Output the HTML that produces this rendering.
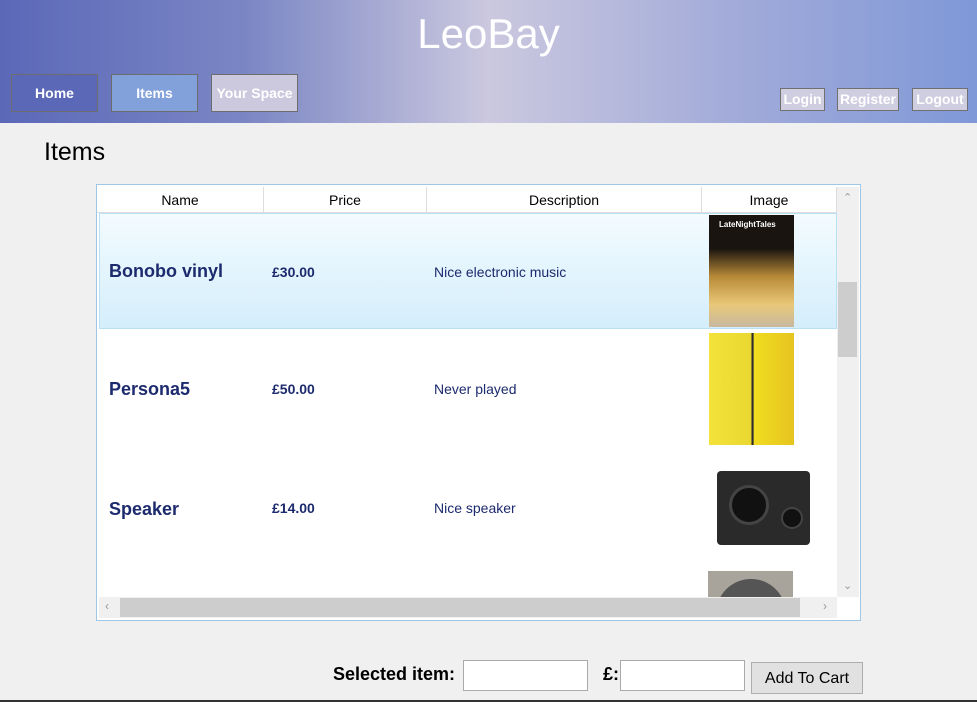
<!DOCTYPE html>
<html><head><meta charset="utf-8"><style>
*{box-sizing:border-box}
body{margin:0;width:977px;height:702px;overflow:hidden;background:#f0f0f0;font-family:"Liberation Sans",sans-serif;position:relative}
.hdr{position:absolute;left:0;top:0;width:977px;height:123px;background:linear-gradient(90deg,#5b68b8 0%,#7a86c4 25%,#cbc8df 50%,#a2abd9 75%,#7f98d8 100%)}
.title{position:absolute;left:0;width:977px;top:10px;text-align:center;color:#fff;font-size:42px;font-family:"Liberation Sans",sans-serif}
.nb{position:absolute;border:1px solid #6d6d6d;color:#fff;font-weight:bold;font-size:14px;text-align:center;line-height:36px;height:38px}
.sb{position:absolute;top:88px;height:23px;border:1px solid #707070;background:#cfcde0;color:#fff;font-weight:bold;font-size:14px;text-align:center;line-height:21px}
h1{position:absolute;left:44px;top:138px;margin:0;font-size:25px;font-weight:normal}
.grid{position:absolute;left:96px;top:184px;width:765px;height:437px;border:1px solid #9ec6e6;background:#fff}
.th{position:absolute;top:2px;height:26px;border-right:1px solid #ddd;border-bottom:1px solid #ddd;text-align:center;font-size:14px;line-height:26px}
.row{position:absolute;left:2px;width:738px;height:117px}
.nm{position:absolute;left:10px;font-weight:bold;color:#1c2a6e;font-size:18px}
.pr{position:absolute;left:173px;font-weight:bold;color:#1c2a6e;font-size:14px}
.ds{position:absolute;left:335px;color:#1c2a6e;font-size:14px}
.img{position:absolute;left:610px;width:85px}
.inp{position:absolute;top:660px;height:31px;background:#fff;border:1px solid #aaa}
</style></head><body>
<div class="hdr">
<div class="title">LeoBay</div>
<div class="nb" style="left:11px;top:74px;width:87px;background:#5b68b8">Home</div>
<div class="nb" style="left:111px;top:74px;width:87px;background:#82a0da">Items</div>
<div class="nb" style="left:211px;top:74px;width:87px;background:#ccc8dd">Your Space</div>
<div class="sb" style="left:780px;width:45px">Login</div>
<div class="sb" style="left:837px;width:62px">Register</div>
<div class="sb" style="left:912px;width:56px">Logout</div>
</div>
<h1>Items</h1>
<div class="grid">
<div class="th" style="left:0;width:167px">Name</div>
<div class="th" style="left:167px;width:163px">Price</div>
<div class="th" style="left:330px;width:275px">Description</div>
<div class="th" style="left:605px;width:135px">Image</div>
<div class="row" style="top:28px;background:linear-gradient(#f3fbff,#d4eefb);border:1px solid #b9e0f5;height:116px">
<div class="nm" style="top:47px;left:9px">Bonobo vinyl</div><div class="pr" style="top:50px;left:172px">£30.00</div><div class="ds" style="top:50px;left:334px">Nice electronic music</div>
<div class="img" style="top:1px;height:112px;left:609px;background:linear-gradient(#1a1410 0%,#1a1410 30%,#b88a38 55%,#e8c878 80%,#c8b8a0 100%)"><div style="color:#fff;font-size:8px;font-weight:bold;padding:5px 0 0 10px">LateNightTales</div></div>
</div>
<div class="row" style="top:146px">
<div class="nm" style="top:48px">Persona5</div><div class="pr" style="top:50px">£50.00</div><div class="ds" style="top:50px">Never played</div>
<div class="img" style="top:2px;height:112px;left:610px;background:linear-gradient(90deg,#f2e23a 0%,#e8d830 50%,#222 50%,#333 52%,#f0dc20 53%,#e6c420 100%)"></div>
</div>
<div class="row" style="top:264px">
<div class="nm" style="top:50px">Speaker</div><div class="pr" style="top:51px">£14.00</div><div class="ds" style="top:51px">Nice speaker</div>
<div style="position:absolute;left:618px;top:22px;width:93px;height:74px;background:#2a2a2a;border-radius:4px"><div style="position:absolute;left:12px;top:14px;width:40px;height:40px;border-radius:50%;background:#111;border:3px solid #444"></div><div style="position:absolute;left:64px;top:36px;width:22px;height:22px;border-radius:50%;background:#111;border:2px solid #444"></div></div>
</div>
<div style="position:absolute;left:611px;top:386px;width:85px;height:26px;background:#a8a49c;overflow:hidden"><div style="position:absolute;left:8px;top:8px;width:70px;height:70px;border-radius:50%;background:#555"></div></div>
<div style="position:absolute;left:740px;top:2px;width:22px;height:410px;background:#f0f0f0"><div style="position:absolute;left:1px;top:95px;width:19px;height:75px;background:#cdcdcd"></div><div style="position:absolute;left:6px;top:4px;color:#999;font-size:11px">⌃</div><div style="position:absolute;left:6px;top:392px;color:#999;font-size:11px">⌄</div></div>
<div style="position:absolute;left:2px;top:412px;width:738px;height:21px;background:#f0f0f0"><div style="position:absolute;left:21px;top:1px;width:680px;height:19px;background:#cdcdcd"></div><div style="position:absolute;left:6px;top:2px;color:#999;font-size:12px">‹</div><div style="position:absolute;left:724px;top:2px;color:#999;font-size:12px">›</div></div>
</div>
<div style="position:absolute;left:333px;top:664px;font-weight:bold;font-size:18px">Selected item:</div>
<div class="inp" style="left:463px;width:125px"></div>
<div style="position:absolute;left:603px;top:664px;font-weight:bold;font-size:18px">£:</div>
<div class="inp" style="left:620px;width:125px"></div>
<div style="position:absolute;left:751px;top:662px;width:112px;height:32px;background:#e1e1e1;border:1px solid #adadad;text-align:center;line-height:32px;font-size:16px">Add To Cart</div>
<div style="position:absolute;left:0;top:700px;width:977px;height:2px;background:#333"></div>
</body></html>
